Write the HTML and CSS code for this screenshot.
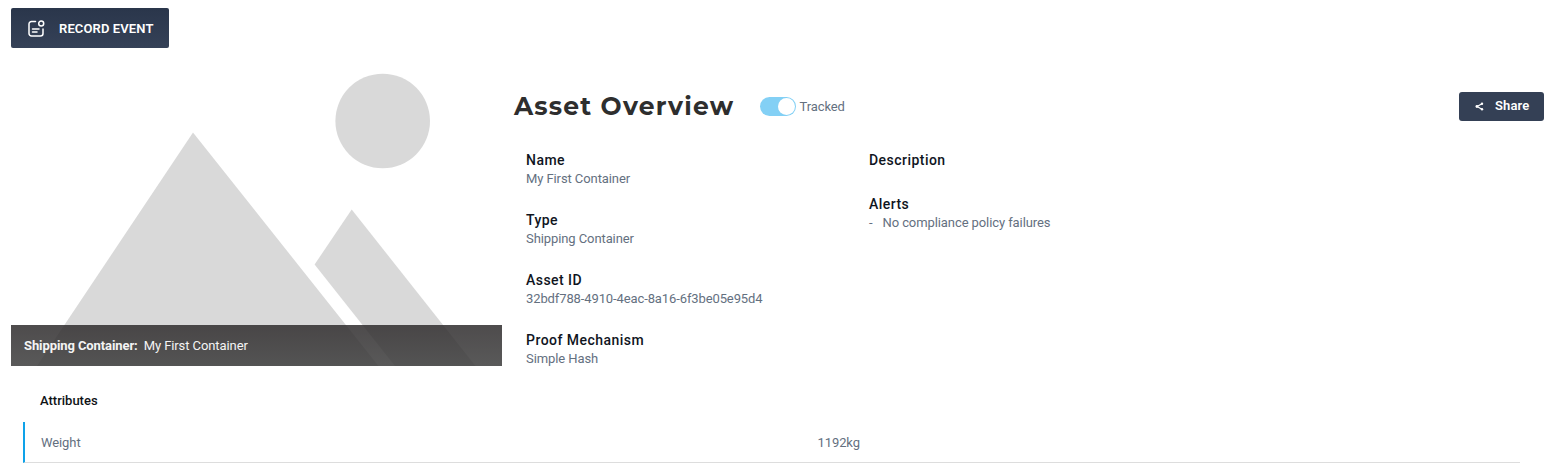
FILE: index.html
```html
<!DOCTYPE html>
<html lang="en">
<head>
<meta charset="utf-8">
<title>Asset Overview</title>
<link rel="stylesheet" href="styles.css">
</head>
<body>
<div class="toolbar">
  <button class="btn record">
    <svg class="record-icon" width="18" height="18" viewBox="0 0 18 18" fill="none" stroke="#fff" stroke-width="1.5" stroke-linecap="round" stroke-linejoin="round">
      <path d="M7.500 1.500H3.500A2.500 2.500 0 0 0 1 4V13.500A2.500 2.500 0 0 0 3.500 16H12.500A2.500 2.500 0 0 0 15 13.500V9"/>
      <circle cx="13.200" cy="3.600" r="2.500"/>
      <path d="M4.500 9H11M4.500 12H9"/>
    </svg>
    <span>RECORD EVENT</span>
  </button>
</div>
<main class="asset">
  <figure class="picture">
    <svg width="491" height="310" viewBox="11 56 491 310" fill="#d9d9d9">
      <circle cx="382.700" cy="121" r="47.300"/>
      <path d="M193 132.500L37 366H378.500Z"/>
      <path d="M351.700 209.500L314.600 264.500L395 366H475.500Z"/>
    </svg>
    <figcaption class="caption"><b>Shipping Container:</b><span>My First Container</span></figcaption>
  </figure>
  <section class="overview">
    <header class="overview-head">
      <h1>Asset Overview</h1>
      <span class="toggle"><span class="knob"></span></span>
      <span class="tracked">Tracked</span>
      <button class="btn share">
        <svg width="9" height="9" viewBox="0 0 9 9" fill="#fff" stroke="#fff">
          <path d="M7 1.700L2 4.500L7 7.300" fill="none" stroke-width="1.200"/>
          <circle cx="7" cy="1.700" r="1.200" stroke="none"/><circle cx="1.900" cy="4.500" r="1.400" stroke="none"/><circle cx="7" cy="7.300" r="1.200" stroke="none"/>
        </svg>
        <span>Share</span>
      </button>
    </header>
    <div class="details">
      <dl>
        <dt>Name</dt><dd>My First Container</dd>
        <dt>Type</dt><dd>Shipping Container</dd>
        <dt>Asset ID</dt><dd class="uuid">32bdf788-4910-4eac-8a16-6f3be05e95d4</dd>
        <dt>Proof Mechanism</dt><dd>Simple Hash</dd>
      </dl>
      <dl>
        <dt class="empty">Description</dt>
        <dt>Alerts</dt><dd class="alert"><span>-</span><span>No compliance policy failures</span></dd>
      </dl>
    </div>
  </section>
</main>
<section class="attributes">
  <h2>Attributes</h2>
  <div class="row"><span>Weight</span><span>1192kg</span></div>
</section>
</body>
</html>
```
FILE: styles.css
```css
* { box-sizing: border-box; }
body { margin: 0; background: #fff; font: 13px/20px Roboto, sans-serif; letter-spacing: -.09px; color: #64707f; }
h1, h2, dl, dd, figure { margin: 0; }
.btn { display: flex; align-items: center; border: 0; border-radius: 3px; color: #fff; font: 600 13px/20px Roboto, sans-serif; letter-spacing: .12px; background: #344055; }
.toolbar { height: 56px; padding: 8px 11px 0; }
.record { width: 158px; height: 40px; padding: 1px 0 0 17px; gap: 13px; background: linear-gradient(#2a364b, #354157); border-radius: 2px; white-space: nowrap; }
.record-icon { flex: none; margin-top: 1px; }
.asset { display: flex; height: 310px; padding: 0 11px; }
.picture { position: relative; width: 491px; height: 310px; flex: none; }
.picture svg { display: block; }
.caption { position: absolute; left: 0; right: 0; bottom: 0; height: 41px; display: flex; align-items: center; gap: 6px; padding-left: 13px; color: #f4f4f4; letter-spacing: -.09px; background: linear-gradient(rgba(47, 44, 45, .85), rgba(62, 62, 62, .86)); }
.overview { flex: 1; padding: 36px 0 0 12px; }
.overview-head { display: flex; align-items: center; height: 29px; }
h1 { width: 246px; font: 700 25px/29px Montserrat, Inter, sans-serif; letter-spacing: 1.22px; color: #2e2e2e; white-space: nowrap; }
.toggle { display: flex; align-items: center; justify-content: flex-end; width: 36px; height: 19px; padding-right: 1px; border-radius: 10px; background: #83d0f5; }
.knob { width: 17px; height: 17px; border-radius: 50%; background: #fff; }
.tracked { margin-left: 3.500px; }
.share { margin-left: auto; width: 85px; height: 29px; padding: 0 0 2px 16px; gap: 11px; }
.share svg { flex: none; margin-top: 2px; }
.details { display: grid; grid-template-columns: 343px 1fr; padding: 29px 0 0 12px; }
dt { font-size: 14px; font-weight: 470; line-height: 20px; letter-spacing: .46px; color: #10151e; }
dd { line-height: 17px; margin-bottom: 23px; }
.uuid { letter-spacing: -.11px; }
.empty { margin-bottom: 24px; }
.alert { display: flex; gap: 10px; }
.attributes { padding: 25px 35px 0 23px; }
h2 { font-size: 13px; font-weight: 470; line-height: 20px; letter-spacing: 0; color: #0f1216; padding-left: 17px; margin-bottom: 11px; }
.row { display: grid; grid-template-columns: 776.500px 1fr; align-items: center; height: 41px; padding: 2px 0 0 16px; border-left: 2px solid #0ea2e9; border-bottom: 1px solid #ddd; }
```
